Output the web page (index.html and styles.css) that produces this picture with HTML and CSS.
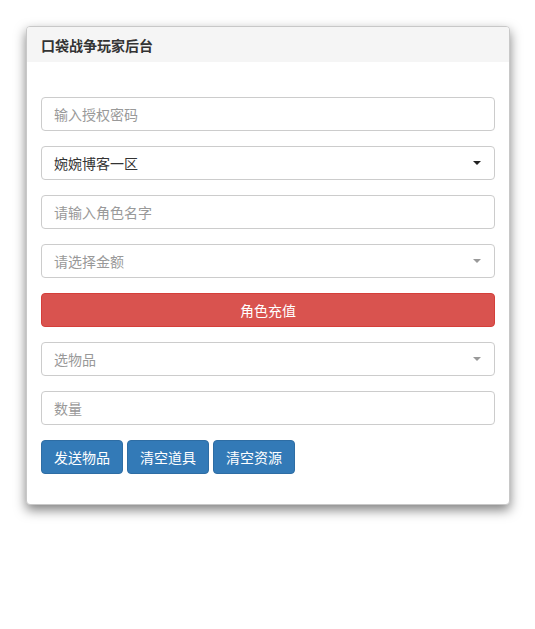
FILE: index.html
```html
<!DOCTYPE html>
<html lang="zh-CN">
<head>
<meta charset="utf-8">
<title>口袋战争玩家后台</title>
<link rel="stylesheet" href="styles.css">
</head>
<body>
<div class="panel">
  <div class="panel-heading">口袋战争玩家后台</div>
  <div class="panel-body">
    <div class="form-group"><input class="form-control" type="text" placeholder="输入授权密码"></div>
    <div class="form-group">
      <div class="select"><span class="value">婉婉博客一区</span><span class="caret dark"></span></div>
    </div>
    <div class="form-group"><input class="form-control" type="text" placeholder="请输入角色名字"></div>
    <div class="form-group">
      <div class="select"><span class="value placeholder">请选择金额</span><span class="caret"></span></div>
    </div>
    <div class="form-group"><button class="btn btn-danger btn-block">角色充值</button></div>
    <div class="form-group">
      <div class="select"><span class="value placeholder">选物品</span><span class="caret"></span></div>
    </div>
    <div class="form-group"><input class="form-control" type="text" placeholder="数量"></div>
    <div class="form-group btn-row">
      <button class="btn btn-primary">发送物品</button>
      <button class="btn btn-primary">清空道具</button>
      <button class="btn btn-primary">清空资源</button>
    </div>
  </div>
</div>
</body>
</html>
```

FILE: styles.css
```css
* { box-sizing: border-box; }
html, body { min-height: 100%; }
body {
  margin: 0;
  padding: 26px 0 60px;
  background: #fff;
  font-family: "Noto Sans CJK SC", "Liberation Sans", sans-serif;
  font-size: 14px;
  color: #333;
}
.panel {
  width: 484px;
  margin: 0 0 0 26px;
  border: 1px solid #c8c8c8;
  border-radius: 4px;
  background: #fff;
  box-shadow: 0 5px 12px rgba(0,0,0,0.5);
}
.panel-heading {
  height: 35px;
  padding: 0 14px;
  display: flex;
  align-items: center;
  background: #f5f5f5;
  border-radius: 3px 3px 0 0;
  font-weight: bold;
  font-size: 14px;
  color: #333;
}
.panel-body {
  padding: 35px 14px 15px;
}
.form-group { margin-bottom: 15px; }
.form-control, .select {
  display: block;
  width: 100%;
  height: 34px;
  padding: 6px 12px;
  font: inherit;
  font-size: 14px;
  color: #333;
  border: 1px solid #ccc;
  border-radius: 4px;
  background: #fff;
  outline: none;
}
.form-control::placeholder { color: #999; }
.select {
  display: flex;
  align-items: center;
  justify-content: space-between;
}
.select .value { color: #333; }
.select .placeholder { color: #999; }
.caret {
  width: 0;
  height: 0;
  margin-right: 1px;
  border-left: 4px solid transparent;
  border-right: 4px solid transparent;
  border-top: 4px solid #999;
}
.caret.dark { border-top-color: #222; }
.btn {
  display: inline-block;
  height: 34px;
  padding: 0 12px;
  font: inherit;
  font-size: 14px;
  color: #fff;
  border: 1px solid transparent;
  border-radius: 4px;
  cursor: pointer;
}
.btn-block { display: block; width: 100%; }
.btn-danger { background: #d9534f; border-color: #d43f3a; }
.btn-primary { background: #337ab7; border-color: #2e6da4; }
.btn-row { display: flex; gap: 4px; }
```
